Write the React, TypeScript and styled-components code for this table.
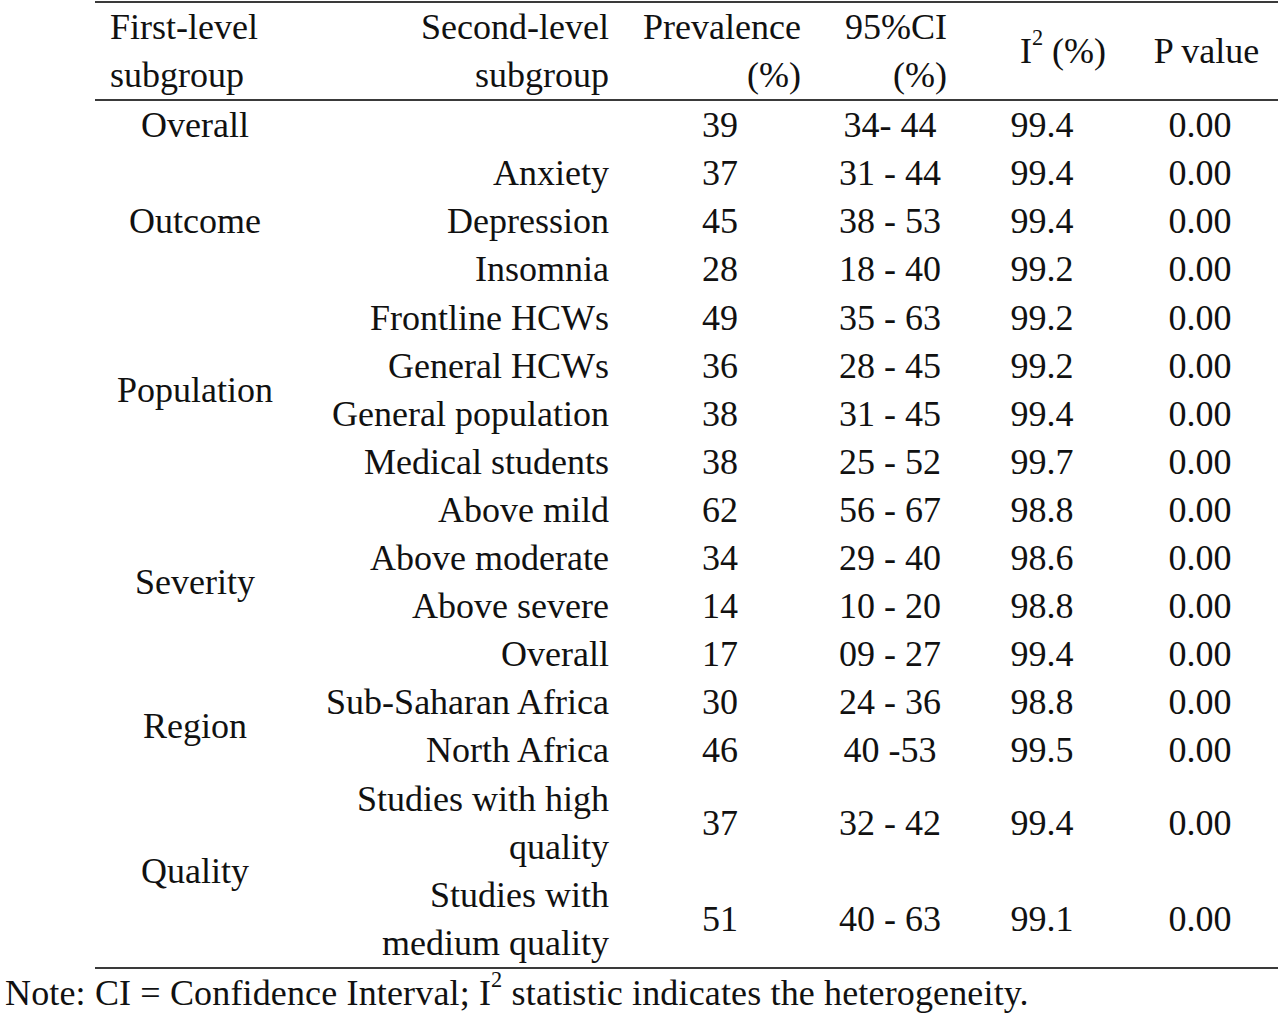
import React from "react";
import styled, { createGlobalStyle } from "styled-components";

const GlobalStyle = createGlobalStyle`
  html, body {
    margin: 0;
    padding: 0;
    background: #ffffff;
  }
  body {
    font-family: "Liberation Serif", "Times New Roman", serif;
    color: #111111;
  }
`;

const Page = styled.div`
  width: 1280px;
  height: 1016px;
  padding: 1px 2px 0 5px;
  box-sizing: border-box;
  font-size: 36px;
  line-height: 48.1px;
  overflow: hidden;
`;

const Table = styled.table`
  margin-left: 90px;
  width: 1183px;
  border-collapse: collapse;
  table-layout: fixed;
  border-top: 2px solid #3a3a3a;
  border-bottom: 2px solid #3a3a3a;
`;

const Head = styled.thead`
  border-bottom: 2px solid #3a3a3a;
`;

type Align = "left" | "center" | "right";

const HeadCell = styled.th<{ $align: Align; $pl?: number; $pr?: number }>`
  font-weight: normal;
  padding: 0 ${(p) => p.$pr || 0}px 0 ${(p) => p.$pl || 0}px;
  text-align: ${(p) => p.$align};
  vertical-align: middle;
  white-space: nowrap;
`;

const Cell = styled.td<{ $align: Align; $pl?: number; $pr?: number }>`
  padding: 0 ${(p) => p.$pr || 0}px 0 ${(p) => p.$pl || 0}px;
  text-align: ${(p) => p.$align};
  vertical-align: middle;
  white-space: nowrap;
`;

const Sup = styled.sup`
  font-size: 0.62em;
  line-height: 0;
  vertical-align: 0.8em;
`;

const Note = styled.div`
  margin-top: 0;
  letter-spacing: 0.15px;
`;

interface Row {
  group?: string;
  span?: number;
  sub: React.ReactNode;
  prev: string;
  ci: string;
  i2: string;
  p: string;
}

const rows: Row[] = [
  { group: "Overall", span: 1, sub: "", prev: "39", ci: "34- 44", i2: "99.4", p: "0.00" },
  { group: "Outcome", span: 3, sub: "Anxiety", prev: "37", ci: "31 - 44", i2: "99.4", p: "0.00" },
  { sub: "Depression", prev: "45", ci: "38 - 53", i2: "99.4", p: "0.00" },
  { sub: "Insomnia", prev: "28", ci: "18 - 40", i2: "99.2", p: "0.00" },
  { group: "Population", span: 4, sub: "Frontline HCWs", prev: "49", ci: "35 - 63", i2: "99.2", p: "0.00" },
  { sub: "General HCWs", prev: "36", ci: "28 - 45", i2: "99.2", p: "0.00" },
  { sub: "General population", prev: "38", ci: "31 - 45", i2: "99.4", p: "0.00" },
  { sub: "Medical students", prev: "38", ci: "25 - 52", i2: "99.7", p: "0.00" },
  { group: "Severity", span: 4, sub: "Above mild", prev: "62", ci: "56 - 67", i2: "98.8", p: "0.00" },
  { sub: "Above moderate", prev: "34", ci: "29 - 40", i2: "98.6", p: "0.00" },
  { sub: "Above severe", prev: "14", ci: "10 - 20", i2: "98.8", p: "0.00" },
  { sub: "Overall", prev: "17", ci: "09 - 27", i2: "99.4", p: "0.00" },
  { group: "Region", span: 2, sub: "Sub-Saharan Africa", prev: "30", ci: "24 - 36", i2: "98.8", p: "0.00" },
  { sub: "North Africa", prev: "46", ci: "40 -53", i2: "99.5", p: "0.00" },
  {
    group: "Quality",
    span: 2,
    sub: (
      <>
        Studies with high
        <br />
        quality
      </>
    ),
    prev: "37",
    ci: "32 - 42",
    i2: "99.4",
    p: "0.00",
  },
  {
    sub: (
      <>
        Studies with
        <br />
        medium quality
      </>
    ),
    prev: "51",
    ci: "40 - 63",
    i2: "99.1",
    p: "0.00",
  },
];

export default function App() {
  return (
    <>
      <GlobalStyle />
      <Page>
        <Table>
          <colgroup>
            <col style={{ width: 200 }} />
            <col style={{ width: 330 }} />
            <col style={{ width: 190 }} />
            <col style={{ width: 150 }} />
            <col style={{ width: 170 }} />
            <col style={{ width: 143 }} />
          </colgroup>
          <Head>
            <tr>
              <HeadCell $align="left" $pl={15}>
                First-level
                <br />
                subgroup
              </HeadCell>
              <HeadCell $align="right" $pr={16}>
                Second-level
                <br />
                subgroup
              </HeadCell>
              <HeadCell $align="right" $pr={14}>
                Prevalence
                <br />
                (%)
              </HeadCell>
              <HeadCell $align="right" $pr={18}>
                95%CI
                <br />
                (%)
              </HeadCell>
              <HeadCell $align="center" $pl={26}>
                I<Sup>2</Sup> (%)
              </HeadCell>
              <HeadCell $align="center">P value</HeadCell>
            </tr>
          </Head>
          <tbody>
            {rows.map((r, i) => (
              <tr key={i}>
                {r.group && (
                  <Cell $align="center" rowSpan={r.span}>
                    {r.group}
                  </Cell>
                )}
                <Cell $align="right" $pr={16}>
                  {r.sub}
                </Cell>
                <Cell $align="center">{r.prev}</Cell>
                <Cell $align="center">{r.ci}</Cell>
                <Cell $align="center" $pr={16}>
                  {r.i2}
                </Cell>
                <Cell $align="center" $pr={13}>
                  {r.p}
                </Cell>
              </tr>
            ))}
          </tbody>
        </Table>
        <Note>
          Note: CI = Confidence Interval; I<Sup>2</Sup> statistic indicates the heterogeneity.
        </Note>
      </Page>
    </>
  );
}
